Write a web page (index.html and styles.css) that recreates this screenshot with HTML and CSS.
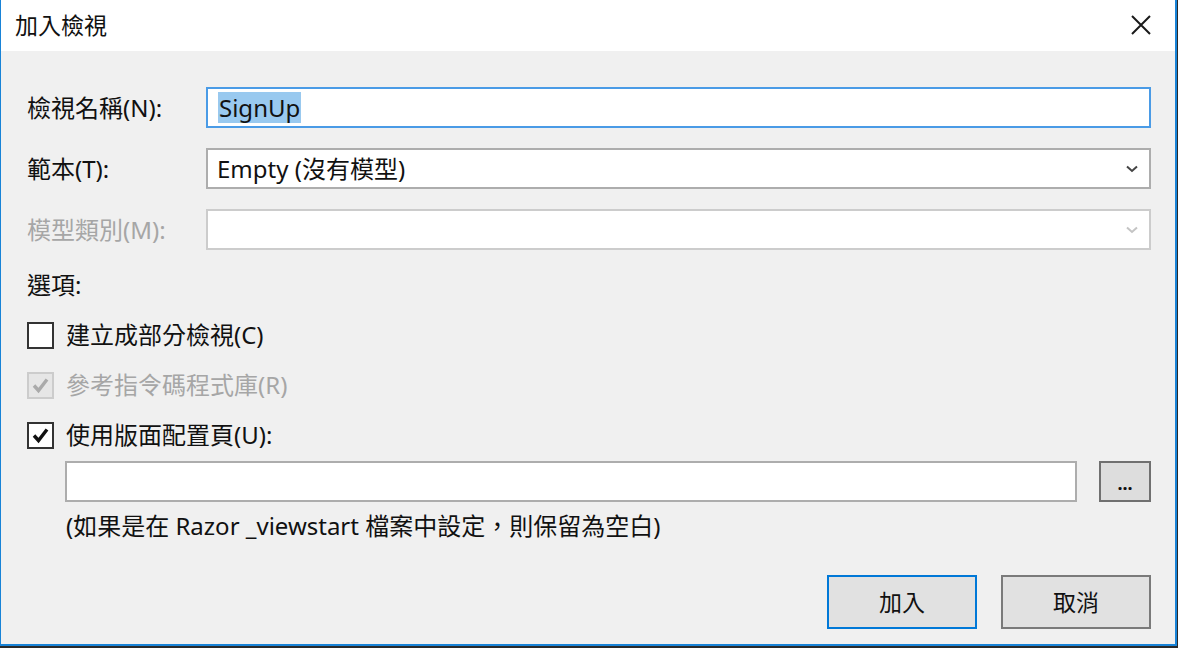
FILE: index.html
```html
<!DOCTYPE html>
<html lang="zh-Hant">
<head>
<meta charset="utf-8">
<link rel="stylesheet" href="styles.css">
</head>
<body>
<div class="window">
  <div class="titlebar">
    <span class="title">加入檢視</span>
    <span class="close">
      <svg width="20" height="20" viewBox="0 0 20 20"><path d="M1 1 L19 19 M19 1 L1 19" stroke="#1a1a1a" stroke-width="2" fill="none"/></svg>
    </span>
  </div>
  <div class="content">
    <div class="form-grid">
      <label class="lbl">檢視名稱(N):</label>
      <div class="field focused"><span class="sel">SignUp</span></div>
      <label class="lbl">範本(T):</label>
      <div class="field combo"><span>Empty (沒有模型)</span>
        <svg class="chev" width="12" height="8" viewBox="0 0 12 8"><path d="M1 1.5 L6 6 L11 1.5" stroke="#444" stroke-width="2" fill="none"/></svg>
      </div>
      <label class="lbl disabled">模型類別(M):</label>
      <div class="field combo off">
        <svg class="chev" width="12" height="8" viewBox="0 0 12 8"><path d="M1 1.5 L6 6 L11 1.5" stroke="#c4c4c4" stroke-width="2" fill="none"/></svg>
      </div>
    </div>
    <div class="options-label">選項:</div>
    <div class="check-row">
      <span class="box"></span>
      <span class="clabel">建立成部分檢視(C)</span>
    </div>
    <div class="check-row dim">
      <span class="box off">
        <svg width="23" height="23" viewBox="0 0 23 23"><path d="M5 11.5 L9.5 16.5 L18 5.5" stroke="#aaaaaa" stroke-width="3.4" fill="none"/></svg>
      </span>
      <span class="clabel disabled">參考指令碼程式庫(R)</span>
    </div>
    <div class="check-row">
      <span class="box">
        <svg width="23" height="23" viewBox="0 0 23 23"><path d="M5 11.5 L9.5 16.5 L18 5.5" stroke="#111" stroke-width="3.4" fill="none"/></svg>
      </span>
      <span class="clabel">使用版面配置頁(U):</span>
    </div>
    <div class="layout-row">
      <div class="field layout-input"></div>
      <div class="browse">...</div>
    </div>
    <div class="hint">(如果是在 Razor _viewstart 檔案中設定，則保留為空白)</div>
    <div class="buttons">
      <div class="btn primary">加入</div>
      <div class="btn">取消</div>
    </div>
  </div>
</div>
</body>
</html>
```
FILE: styles.css
```css
html, body {
  margin: 0;
  padding: 0;
}
body {
  width: 1178px;
  height: 648px;
  background: #2a2a2a;
  overflow: hidden;
  font-family: "Segoe UI", "Noto Sans", "Noto Sans CJK TC", sans-serif;
  color: #111;
}
.window {
  width: 1174px;
  height: 644px;
  border-left: 1px solid #1883d7;
  border-right: 2px solid #1883d7;
  border-bottom: 2px solid #1883d7;
  background: #f0f0f0;
  display: flex;
  flex-direction: column;
}
.titlebar {
  height: 51px;
  background: #ffffff;
  display: flex;
  align-items: center;
  justify-content: space-between;
  padding: 0 24px 0 14px;
  flex-shrink: 0;
}
.title {
  font-size: 23px;
  line-height: 26px;
  color: #111;
  margin-top: -2px;
}
.close {
  display: flex;
  margin-top: -2px;
}
.content {
  padding: 36px 24px 0 26px;
  display: flex;
  flex-direction: column;
}
.form-grid {
  display: grid;
  grid-template-columns: 179px 1fr;
  grid-auto-rows: 41px;
  row-gap: 20px;
  align-items: center;
}
.lbl {
  font-size: 24px;
  line-height: 28px;
  color: #111;
}
.disabled {
  color: #a6a6a6;
}
.field {
  height: 41px;
  box-sizing: border-box;
  background: #ffffff;
  border: 2px solid #adadad;
  display: flex;
  align-items: center;
  padding: 0 9px;
  font-size: 24px;
  line-height: 28px;
}
.focused {
  border-color: #4a9be6;
  padding-left: 10px;
}
.sel {
  background: #99c9ef;
  line-height: 31px;
  padding: 0 1px;
}
.combo {
  justify-content: space-between;
  padding-right: 11px;
}
.combo.off {
  border-color: #cccccc;
  justify-content: flex-end;
}
.chev {
  display: block;
}
.options-label {
  height: 50px;
  margin-top: 10px;
  display: flex;
  align-items: center;
  font-size: 24px;
  line-height: 28px;
}
.check-row {
  height: 50px;
  display: flex;
  align-items: center;
  gap: 12px;
}
.box {
  width: 27px;
  height: 27px;
  box-sizing: border-box;
  border: 2px solid #333333;
  background: #ffffff;
  display: flex;
  align-items: center;
  justify-content: center;
}
.box.off {
  border-color: #cccccc;
  background: #e6e6e6;
}
.clabel {
  font-size: 24px;
  line-height: 28px;
}
.layout-row {
  margin-top: 1px;
  margin-left: 38px;
  display: flex;
  gap: 22px;
}
.layout-input {
  flex: 1;
}
.browse {
  width: 52px;
  height: 41px;
  box-sizing: border-box;
  background: #dddddd;
  border: 2px solid #707070;
  display: flex;
  align-items: center;
  justify-content: center;
  font-size: 18px;
  line-height: 20px;
  padding-top: 2px;
  font-weight: bold;
}
.hint {
  margin-left: 39px;
  margin-top: 10px;
  font-size: 24px;
  line-height: 28px;
}
.buttons {
  margin-top: 35px;
  display: flex;
  justify-content: flex-end;
  gap: 24px;
}
.btn {
  width: 150px;
  height: 54px;
  box-sizing: border-box;
  background: #e1e1e1;
  border: 2px solid #7a7a7a;
  display: flex;
  align-items: center;
  justify-content: center;
  font-size: 23px;
  line-height: 26px;
}
.btn.primary {
  border-color: #0078d7;
}
```
